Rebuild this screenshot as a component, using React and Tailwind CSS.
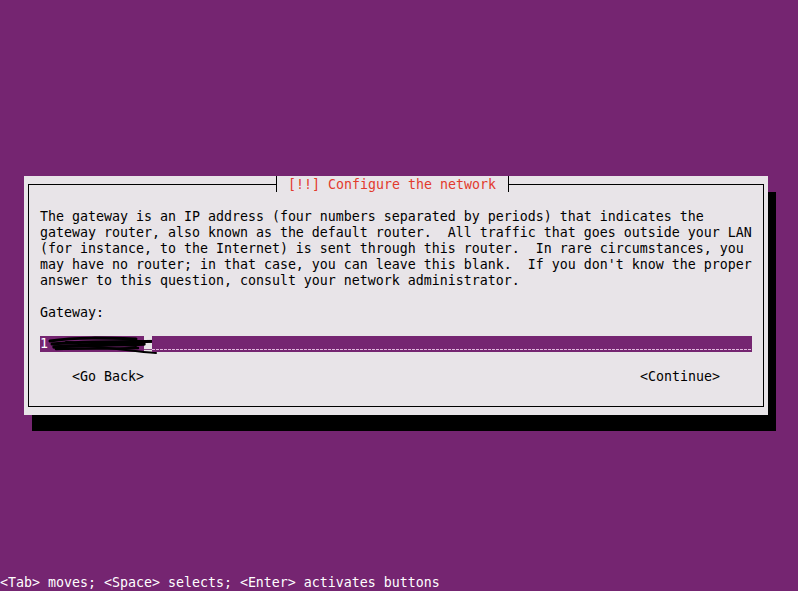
import React from "react";

const bodyLines = [
  "The gateway is an IP address (four numbers separated by periods) that indicates the",
  "gateway router, also known as the default router.  All traffic that goes outside your LAN",
  "(for instance, to the Internet) is sent through this router.  In rare circumstances, you",
  "may have no router; in that case, you can leave this blank.  If you don't know the proper",
  "answer to this question, consult your network administrator.",
];

// redaction ink over the typed address
const Scribble = () => (
  <svg width="140" height="24" viewBox="0 0 140 24" className="absolute left-[6px] top-[-2px]">
    <path d="M4 7 C30 3 60 4 90 5" stroke="#000" strokeWidth="3" fill="none" strokeLinecap="round" />
    <path d="M6 10 C40 7 80 8 130 7" stroke="#000" strokeWidth="3" fill="none" strokeLinecap="round" />
    <path d="M8 13 C40 11 70 11 98 10" stroke="#000" strokeWidth="3.5" fill="none" strokeLinecap="round" />
    <path d="M10 15 C40 14 60 15 92 14" stroke="#000" strokeWidth="2.5" fill="none" strokeLinecap="round" />
    <path d="M40 12 C70 14 90 18 110 19" stroke="#000" strokeWidth="2" fill="none" strokeLinecap="round" />
    <path d="M20 8 C50 9 70 10 90 12" stroke="#000" strokeWidth="2" fill="none" strokeLinecap="round" />
  </svg>
);

const GatewayField = () => (
  <div className="flex h-[16px] w-[712px]">
    <div className="relative h-[16px] w-[104px] bg-[#752571] text-white">
      <span>1</span>
      <Scribble />
    </div>
    <div className="relative h-[16px] w-[8px]">
      <div className="absolute bottom-[2px] left-0 h-[1px] w-[8px] bg-[#8a4a86]" />
    </div>
    <div className="relative h-[16px] flex-1 bg-[#752571]">
      <div className="absolute bottom-[2px] left-0 right-0 h-[1px] bg-[repeating-linear-gradient(90deg,#e2b6de_0_3px,transparent_3px_4px)]" />
    </div>
  </div>
);

export default function App() {
  return (
    <div
      className="flex h-[591px] w-[798px] flex-col overflow-hidden bg-[#752571] text-[13.29px] leading-[16px] text-black"
      style={{ fontFamily: '"DejaVu Sans Mono", "Liberation Mono", monospace' }}
    >
      <div className="relative ml-[24px] mt-[176px] h-[240px] w-[744px] bg-[#e8e4e8] shadow-[8px_16px_0_0_#000]">
        <div className="absolute left-[4px] right-[4px] top-[8px] bottom-[8px] border border-black" />
        <div className="absolute left-[252px] top-0 flex h-[16px] w-[233px] border-x border-black bg-[#e8e4e8] pl-[11px] pt-[1px] text-[#e23a2c]">
          <span className="whitespace-pre">[!!] Configure the network</span>
        </div>
        <div className="relative flex flex-col px-[16px] pt-[33px]">
          {bodyLines.map((line, i) => (
            <div key={i} className="h-[16px] whitespace-pre">{line}</div>
          ))}
          <div className="h-[16px]" />
          <div className="h-[16px]">Gateway:</div>
          <div className="h-[15px]" />
          <GatewayField />
          <div className="h-[17px]" />
          <div className="mx-[32px] flex h-[16px] justify-between">
            <span>&lt;Go Back&gt;</span>
            <span>&lt;Continue&gt;</span>
          </div>
        </div>
      </div>
      <div className="mt-[160px] h-[16px] whitespace-pre text-white">
        &lt;Tab&gt; moves; &lt;Space&gt; selects; &lt;Enter&gt; activates buttons
      </div>
    </div>
  );
}
